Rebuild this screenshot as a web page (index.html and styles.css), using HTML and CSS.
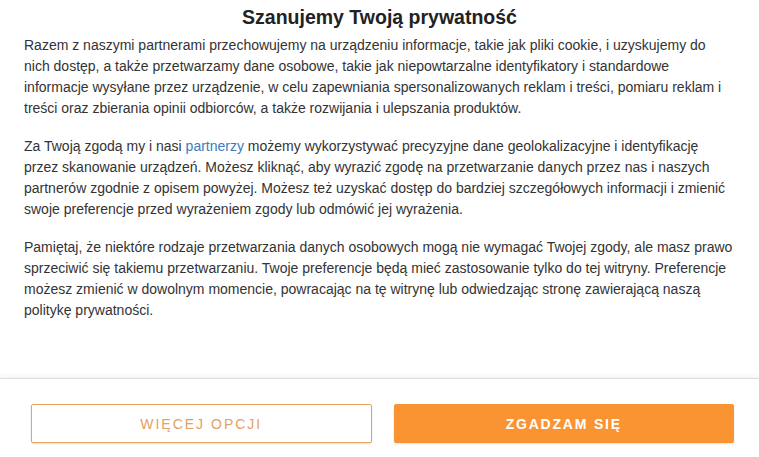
FILE: index.html
```html
<!DOCTYPE html>
<html lang="pl">
<head>
<meta charset="utf-8">
<title>Szanujemy Twoją prywatność</title>
<link rel="stylesheet" href="styles.css">
</head>
<body>
<div class="dialog">
  <main class="content">
    <h1 class="title">Szanujemy Twoją prywatność</h1>
    <p class="text">Razem z naszymi partnerami przechowujemy na urządzeniu informacje, takie jak pliki cookie, i uzyskujemy do nich dostęp, a także przetwarzamy dane osobowe, takie jak niepowtarzalne identyfikatory i standardowe informacje wysyłane przez urządzenie, w celu zapewniania spersonalizowanych reklam i treści, pomiaru reklam i treści oraz zbierania opinii odbiorców, a także rozwijania i ulepszania produktów.</p>
    <p class="text">Za Twoją zgodą my i nasi <a class="link" href="#">partnerzy</a> możemy wykorzystywać precyzyjne dane geolokalizacyjne i identyfikację przez skanowanie urządzeń. Możesz kliknąć, aby wyrazić zgodę na przetwarzanie danych przez nas i naszych partnerów zgodnie z opisem powyżej. Możesz też uzyskać dostęp do bardziej szczegółowych informacji i zmienić swoje preferencje przed wyrażeniem zgody lub odmówić jej wyrażenia.</p>
    <p class="text">Pamiętaj, że niektóre rodzaje przetwarzania danych osobowych mogą nie wymagać Twojej zgody, ale masz prawo sprzeciwić się takiemu przetwarzaniu. Twoje preferencje będą mieć zastosowanie tylko do tej witryny. Preferencje możesz zmienić w dowolnym momencie, powracając na tę witrynę lub odwiedzając stronę zawierającą naszą politykę prywatności.</p>
  </main>
  <footer class="footer">
    <button class="btn btn-secondary" type="button">WIĘCEJ OPCJI</button>
    <button class="btn btn-primary" type="button">ZGADZAM SIĘ</button>
  </footer>
</div>
</body>
</html>
```
FILE: styles.css
```css
html, body {
  margin: 0;
  padding: 0;
  background: #fff;
}
body {
  font-family: "Liberation Sans", Arial, sans-serif;
  color: #333;
}
.dialog {
  display: flex;
  flex-direction: column;
  height: 457px;
}
.content {
  flex: 1;
  padding: 5px 24px 0 24px;
}
.title {
  margin: 0 0 6px 0;
  font-size: 19.5px;
  line-height: 24px;
  font-weight: bold;
  text-align: center;
  color: #222;
}
.text {
  margin: 0 0 17px 0;
  font-size: 14px;
  line-height: 21px;
}
.text:last-child {
  margin-bottom: 0;
}
.link {
  color: #3a7cc0;
  text-decoration: none;
}
.footer {
  display: flex;
  gap: 22px;
  padding: 25px 25px 14px 31px;
  border-top: 1px solid #dcdcdc;
  box-shadow: 0 -3px 5px rgba(0, 0, 0, 0.04);
}
.btn {
  flex: 1;
  height: 39px;
  box-sizing: border-box;
  border-radius: 2px;
  font-family: "Liberation Sans", Arial, sans-serif;
  font-size: 14px;
  letter-spacing: 2px;
  cursor: pointer;
  box-shadow: 0 1px 2px rgba(0, 0, 0, 0.12);
}
.btn-secondary {
  background: #fff;
  border: 1px solid #e8a35f;
  color: #e6a061;
}
.btn-primary {
  background: #fa9433;
  border: 1px solid #fa9433;
  color: #fff;
  font-weight: bold;
  letter-spacing: 1.8px;
}
```
